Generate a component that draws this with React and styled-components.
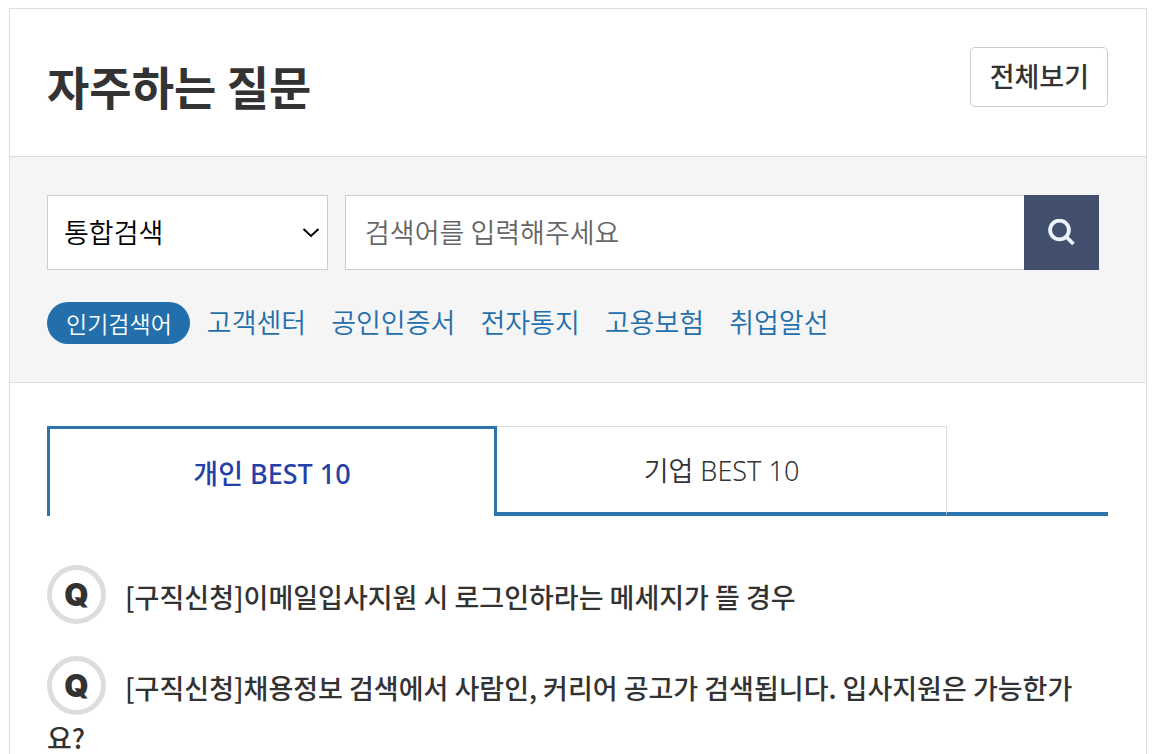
import React from "react";
import styled, { createGlobalStyle } from "styled-components";

const colors = {
  text: "#333",
  line: "#ddd",
  fieldLine: "#ccc",
  blue: "#236fac",
  tabBlue: "#2b74ad",
  navy: "#424f6d",
};

const keywords = ["고객센터", "공인인증서", "전자통지", "고용보험", "취업알선"];

const tabs = ["개인 BEST 10", "기업 BEST 10"];

const questions = [
  "[구직신청]이메일입사지원 시 로그인하라는 메세지가 뜰 경우",
  "[구직신청]채용정보 검색에서 사람인, 커리어 공고가 검색됩니다. 입사지원은 가능한가요?",
];

const App = () => {
  const [active, setActive] = React.useState(0);

  return (
    <>
      <GlobalStyle />
      <Panel>
        <Header>
          <Title>자주하는 질문</Title>
          <MoreButton type='button'>전체보기</MoreButton>
        </Header>

        <SearchArea>
          <SearchForm onSubmit={(e) => e.preventDefault()}>
            <SelectWrap>
              <Select aria-label='검색 구분'>
                <option>통합검색</option>
              </Select>
              <Chevron viewBox='0 0 18 10' aria-hidden='true'>
                <path d='M1.5 1 L9 8 L16.5 1' />
              </Chevron>
            </SelectWrap>
            <SearchInput
              type='text'
              aria-label='검색어'
              placeholder='검색어를 입력해주세요'
            />
            <SearchButton type='submit' aria-label='검색'>
              <svg viewBox='0 0 28 28' width='28' height='28'>
                <circle cx='11.5' cy='11' r='9.4' />
                <path d='M18 17.5 L25.5 25' />
              </svg>
            </SearchButton>
          </SearchForm>
          <Keywords>
            <Pill>인기검색어</Pill>
            <KeywordList>
              {keywords.map((word) => (
                <li key={word}>
                  <a href='#search'>{word}</a>
                </li>
              ))}
            </KeywordList>
          </Keywords>
        </SearchArea>

        <Tabs role='tablist'>
          {tabs.map((tab, i) => (
            <Tab
              key={tab}
              type='button'
              role='tab'
              aria-selected={active === i}
              $active={active === i}
              onClick={() => setActive(i)}
            >
              {tab}
            </Tab>
          ))}
          <TabRest />
        </Tabs>

        <QuestionList>
          {questions.map((question) => (
            <Question key={question}>
              <a href='#question'>
                <Mark>Q</Mark>
                {question}
              </a>
            </Question>
          ))}
        </QuestionList>
      </Panel>
    </>
  );
};

const GlobalStyle = createGlobalStyle`
  * {
    box-sizing: border-box;
  }

  html {
    overflow: hidden;
  }

  body {
    margin: 8px 9px;
    background: #fff;
    color: ${colors.text};
    font-family: "Noto Sans CJK KR", sans-serif;
    font-size: 27px;
  }

  button,
  input,
  select {
    font: inherit;
  }

  ul {
    margin: 0;
    padding: 0;
    list-style: none;
  }

  a {
    color: inherit;
    text-decoration: none;
  }
`;

const Panel = styled.section`
  border: 1px solid ${colors.line};
`;

const Header = styled.header`
  display: flex;
  justify-content: space-between;
  align-items: flex-start;
  padding: 38px 38px 45px 37px;
`;

const Title = styled.h2`
  margin: 12px 0 0;
  font-size: 46px;
  font-weight: 700;
  line-height: 52px;
`;

const MoreButton = styled.button`
  height: 60px;
  padding: 0 18px 2px 19px;
  border: 1px solid ${colors.fieldLine};
  border-radius: 5px;
  background: #fff;
  color: ${colors.text};
  font-weight: 500;
  line-height: 40px;
  cursor: pointer;
`;

const SearchArea = styled.div`
  padding: 38px 47px 38px 37px;
  border-top: 1px solid ${colors.line};
  border-bottom: 1px solid ${colors.line};
  background: #f5f5f5;
  font-weight: 350;
`;

const SearchForm = styled.form`
  display: flex;
  height: 75px;
`;

const SelectWrap = styled.div`
  display: grid;
  flex: 0 0 281px;
  align-items: center;
  margin-right: 17px;

  > * {
    grid-area: 1 / 1;
  }
`;

const Select = styled.select`
  width: 100%;
  height: 100%;
  padding: 0 16px 2px;
  border: 1px solid ${colors.fieldLine};
  border-radius: 0;
  background: #fff;
  color: #000;
  appearance: none;
`;

const Chevron = styled.svg`
  width: 18px;
  height: 10px;
  margin-right: 8px;
  justify-self: end;
  fill: none;
  stroke: #000;
  stroke-width: 2;
  pointer-events: none;
`;

const SearchInput = styled.input`
  flex: 1;
  min-width: 0;
  padding: 0 19px 2px;
  border: 1px solid ${colors.fieldLine};
  border-right: none;
  border-radius: 0;
  background: #fff;

  &::placeholder {
    color: #666;
  }
`;

const SearchButton = styled.button`
  display: flex;
  justify-content: center;
  align-items: center;
  width: 75px;
  padding: 0;
  border: none;
  background: ${colors.navy};
  cursor: pointer;

  svg {
    fill: none;
    stroke: #eef3fc;
    stroke-width: 3.8;
  }
`;

const Keywords = styled.div`
  display: flex;
  align-items: center;
  margin-top: 32px;
`;

const Pill = styled.strong`
  padding: 0 18px 0 19px;
  border-radius: 21px;
  background: ${colors.blue};
  color: #fff;
  font-size: 23px;
  font-weight: 350;
  line-height: 42px;
`;

const KeywordList = styled.ul`
  display: flex;
  gap: 25px;
  margin-left: 17px;
  padding-bottom: 2px;
  color: ${colors.blue};
  line-height: 40px;
`;

const Tabs = styled.div`
  display: flex;
  height: 90px;
  margin: 43px 38px 0 37px;
`;

const Tab = styled.button`
  flex: 0 0 450px;
  padding: 0;
  border: ${({ $active }) =>
    $active ? `3px solid ${colors.tabBlue}` : `1px solid ${colors.line}`};
  border-bottom: ${({ $active }) =>
    $active ? "none" : `4px solid ${colors.tabBlue}`};
  border-left-width: ${({ $active }) => ($active ? "3px" : "0")};
  background: #fff;
  color: ${({ $active }) => ($active ? "#2541a8" : colors.text)};
  font-family: "Noto Sans", "Noto Sans CJK KR", sans-serif;
  font-size: 27px;
  font-weight: ${({ $active }) => ($active ? 500 : 350)};
  cursor: pointer;
`;

const TabRest = styled.div`
  flex: 1;
  border-bottom: 4px solid ${colors.tabBlue};
`;

const QuestionList = styled.ul`
  padding: 49px 38px 0 37px;
  font-weight: 500;
`;

const Question = styled.li`
  margin-bottom: 32px;
  line-height: 46px;
`;

const Mark = styled.span`
  display: inline-flex;
  justify-content: center;
  align-items: center;
  width: 59px;
  height: 59px;
  margin-right: 19px;
  border: 5px solid ${colors.line};
  border-radius: 50%;
  font-family: Inter, sans-serif;
  font-size: 31px;
  font-weight: 900;
  line-height: 30px;
  vertical-align: 2px;
`;

export default App;
